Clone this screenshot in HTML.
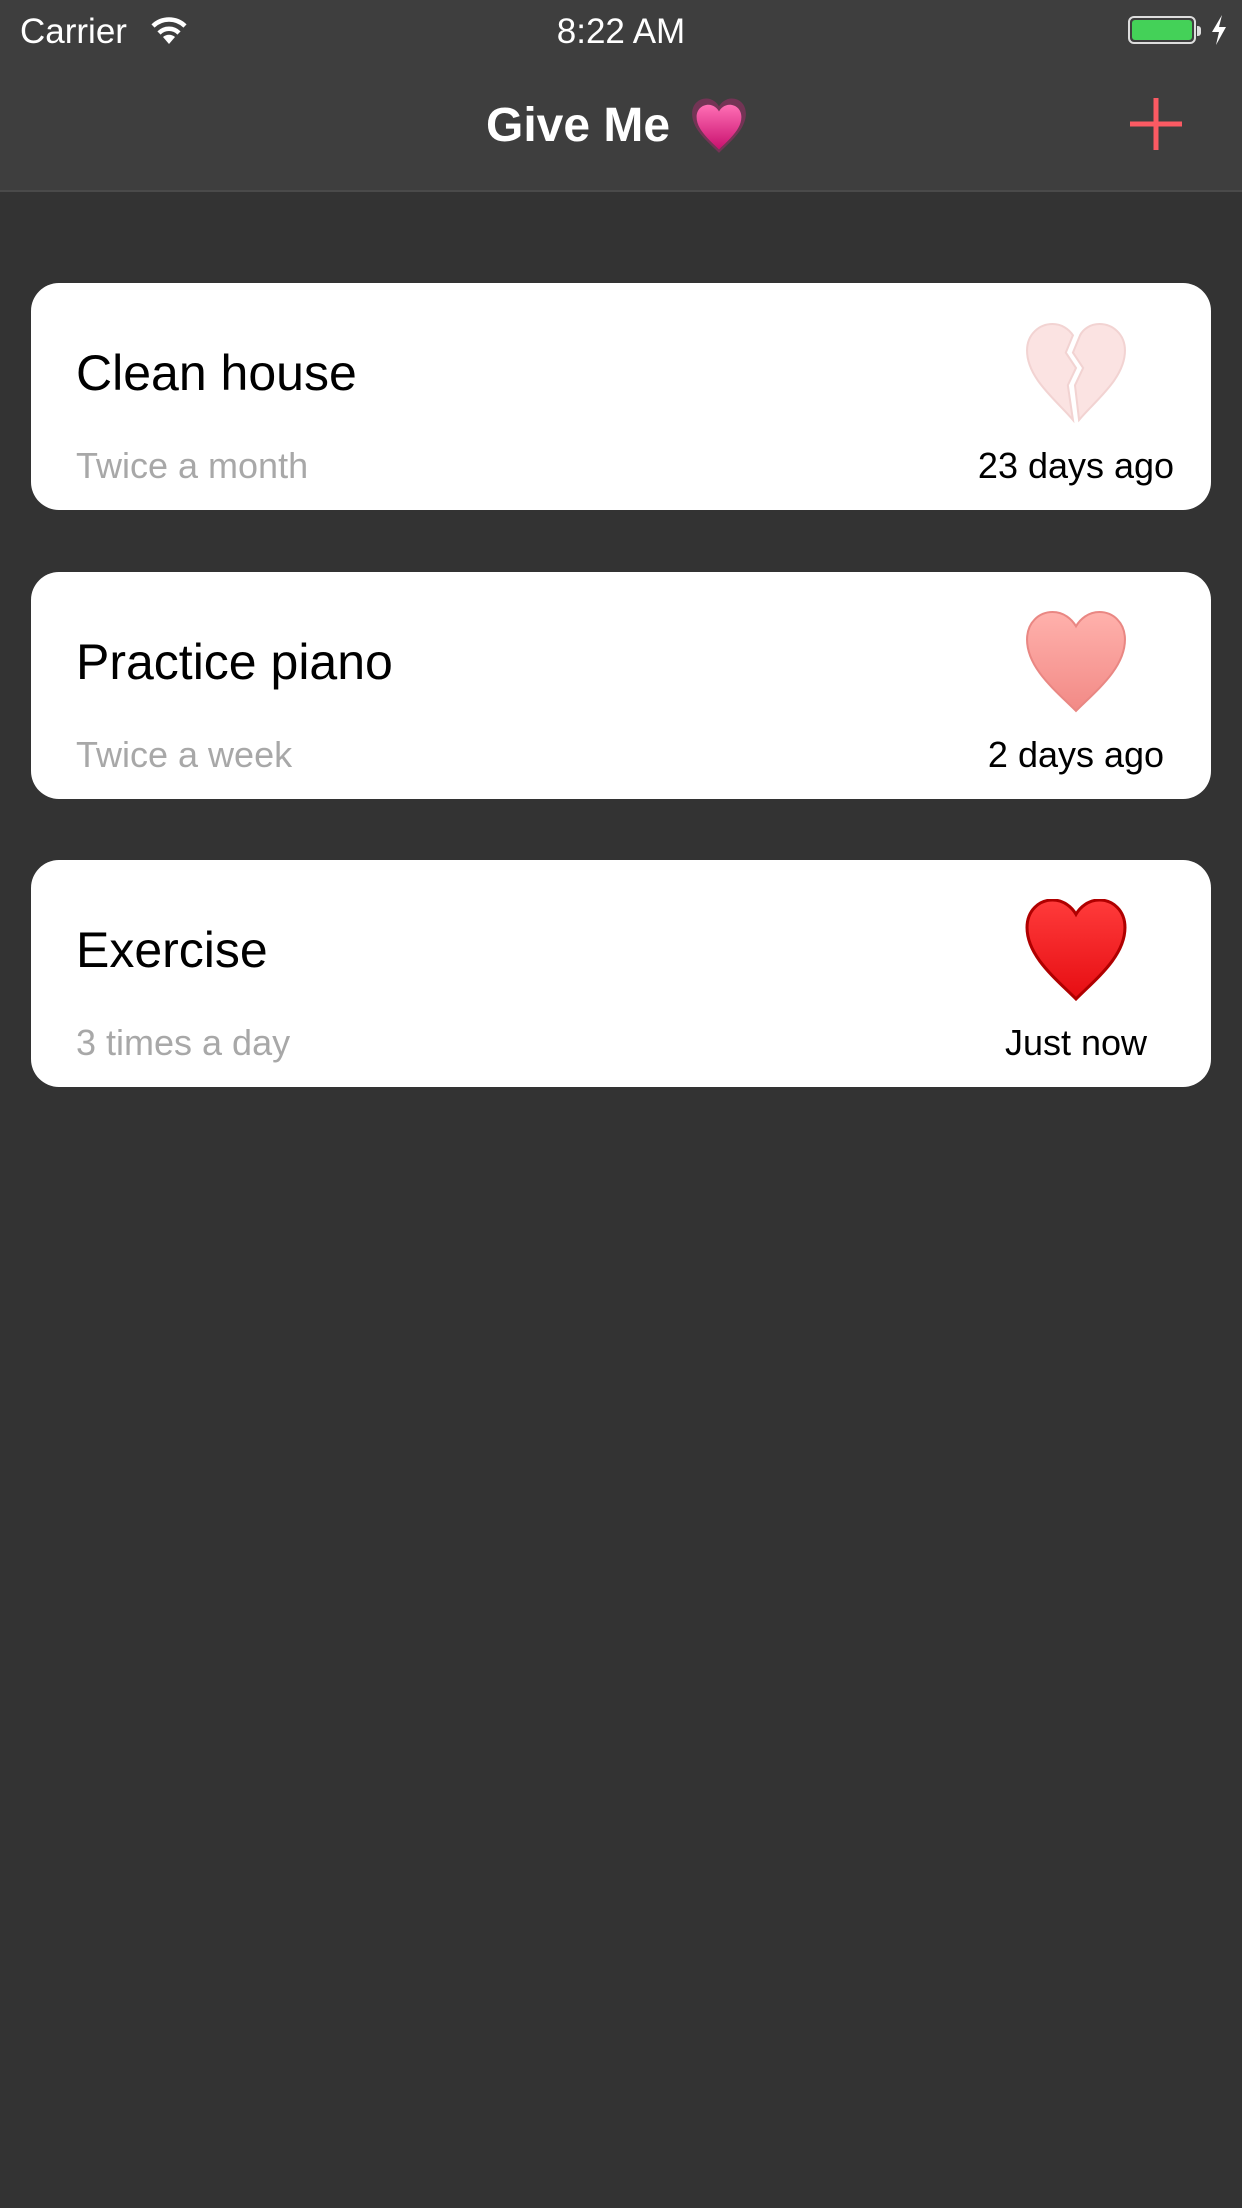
<!DOCTYPE html>
<html><head><meta charset="utf-8"><style>
*{margin:0;padding:0;box-sizing:border-box}
body{width:1242px;height:2208px;background:#333333;font-family:"Liberation Sans",sans-serif;position:relative;overflow:hidden}
.nav{position:absolute;left:0;top:0;width:1242px;height:192px;background:#3e3e3e;border-bottom:2px solid #4a4a4a}
.t{position:absolute;line-height:1;white-space:nowrap}
.card{position:absolute;left:31px;width:1180px;height:227px;background:#fff;border-radius:28px}
.title{left:45px;top:65px;font-size:50px;color:#000}
.sub{left:45px;top:165px;font-size:36px;color:#a8a8a8}
.right{left:945px;width:200px;text-align:center;top:165px;font-size:36px;color:#000}
.heart{position:absolute;left:994px;top:39px;width:102px;height:102px}
</style></head><body>
<div class="nav"></div>
<div class="t" style="left:20px;top:14px;font-size:35px;color:#fff">Carrier</div>
<svg style="position:absolute;left:150px;top:15px" width="38" height="30" viewBox="0 0 38 30">
<path d="M19 29 L13 22 A9 9 0 0 1 25 22 Z" fill="#fff"/>
<path d="M9 18 A14 14 0 0 1 29 18" stroke="#fff" stroke-width="4.5" fill="none"/>
<path d="M3 11 A23 23 0 0 1 35 11" stroke="#fff" stroke-width="4.5" fill="none"/>
</svg>
<div class="t" style="left:521px;width:200px;text-align:center;top:14px;font-size:35px;color:#fff">8:22 AM</div>
<div style="position:absolute;left:1128px;top:16px;width:68px;height:28px;border:2px solid #ddd;border-radius:6px;padding:2px"><div style="width:100%;height:100%;background:#44d158;border-radius:3px"></div></div>
<div style="position:absolute;left:1197px;top:26px;width:4px;height:10px;background:#ddd;border-radius:0 3px 3px 0"></div>
<svg style="position:absolute;left:1210px;top:15px" width="18" height="30" viewBox="0 0 18 30"><path d="M12 0 L2 17 L9 17 L6 30 L16 12 L9 12 Z" fill="#fff"/></svg>

<div class="t" style="left:486px;top:102px;font-size:48px;font-weight:bold;color:#fff">Give Me</div>
<svg style="position:absolute;left:690px;top:98px" width="58" height="56" viewBox="0 0 100 100">
<defs><linearGradient id="pk" x1="0" y1="0" x2="0" y2="1"><stop offset="0" stop-color="#ff6fb5"/><stop offset="1" stop-color="#c8106e"/></linearGradient></defs>
<path d="M50 98 C30 78 2 56 2 28 C2 11 14 1 27 1 C38 1 46 8 50 15 C54 8 62 1 73 1 C86 1 98 11 98 28 C98 56 70 78 50 98 Z" fill="#8a3060" opacity="0.7"/>
<path d="M50 92 C32 74 10 56 10 34 C10 20 20 12 31 12 C40 12 47 18 50 24 C53 18 60 12 69 12 C80 12 90 20 90 34 C90 56 68 74 50 92 Z" fill="url(#pk)"/>
</svg>
<svg style="position:absolute;left:1128px;top:96px" width="56" height="56" viewBox="0 0 56 56"><path d="M28 2 V54 M2 28 H54" stroke="#fb5a63" stroke-width="5"/></svg>

<div class="card" style="top:283px">
<div class="t title">Clean house</div>
<div class="t sub">Twice a month</div>
<div class="t right">23 days ago</div>
<svg class="heart" viewBox="0 0 100 100">
<path d="M47 96 C30 76 2 55 2 28 C2 12 14 2 27 2 C36 2 43 7 47 13 L40 30 L50 45 L42 62 Z" fill="#fbe3e2" stroke="#f2d3d2" stroke-width="2"/>
<path d="M53 96 C70 76 98 55 98 28 C98 12 86 2 73 2 C64 2 57 7 54 13 L47 30 L57 45 L49 62 Z" fill="#fbe3e2" stroke="#f2d3d2" stroke-width="2"/>
</svg>
</div>

<div class="card" style="top:572px">
<div class="t title">Practice piano</div>
<div class="t sub">Twice a week</div>
<div class="t right">2 days ago</div>
<svg class="heart" viewBox="0 0 100 100">
<defs><linearGradient id="pp" x1="0" y1="0" x2="0" y2="1"><stop offset="0" stop-color="#ffb1ac"/><stop offset="1" stop-color="#f28a86"/></linearGradient></defs>
<path d="M50 98 C30 78 2 56 2 28 C2 11 14 1 27 1 C38 1 46 8 50 15 C54 8 62 1 73 1 C86 1 98 11 98 28 C98 56 70 78 50 98 Z" fill="url(#pp)" stroke="#e98783" stroke-width="2"/>
</svg>
</div>

<div class="card" style="top:860px">
<div class="t title">Exercise</div>
<div class="t sub">3 times a day</div>
<div class="t right">Just now</div>
<svg class="heart" viewBox="0 0 100 100">
<defs><linearGradient id="rd" x1="0" y1="0" x2="0" y2="1"><stop offset="0" stop-color="#ff3b3b"/><stop offset="1" stop-color="#e60d12"/></linearGradient></defs>
<path d="M50 98 C30 78 2 56 2 28 C2 11 14 1 27 1 C38 1 46 8 50 15 C54 8 62 1 73 1 C86 1 98 11 98 28 C98 56 70 78 50 98 Z" fill="url(#rd)" stroke="#b00000" stroke-width="3"/>
</svg>
</div>
</body></html>
